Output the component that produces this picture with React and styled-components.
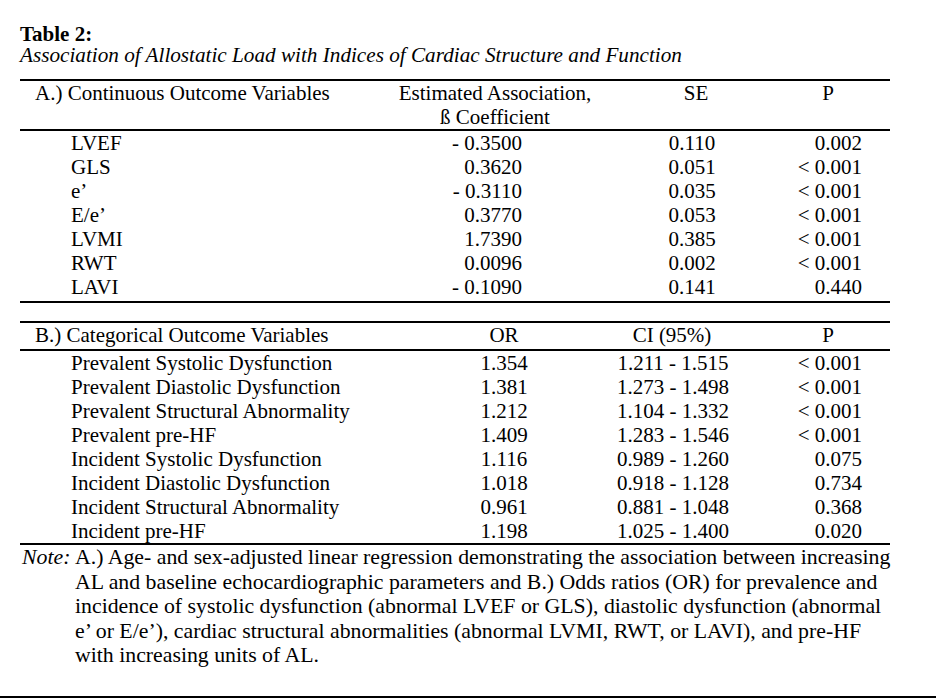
import React from 'react';
import styled, { createGlobalStyle } from 'styled-components';

const GlobalStyle = createGlobalStyle`
  html, body {
    margin: 0;
    padding: 0;
    background: #ffffff;
  }
`;

const Page = styled.div`
  width: 936px;
  height: 698px;
  box-sizing: border-box;
  padding: 24px 46px 0 20px;
  border-bottom: 2px solid #000;
  font-family: "Liberation Serif", "Times New Roman", serif;
  font-size: 21px;
  color: #000;
`;

const Title = styled.div`
  font-weight: bold;
  line-height: 21px;
`;

const Subtitle = styled.div`
  font-style: italic;
  font-size: 21.2px;
  line-height: 21px;
  margin-bottom: 13px;
`;

const Section = styled.div`
  border-top: 2px solid #000;
  border-bottom: ${p => (p.$closed ? '2px solid #000' : 'none')};
  padding-bottom: ${p => p.$pb || 0}px;
  margin-top: ${p => p.$mt || 0}px;
`;

const Row = styled.div`
  display: grid;
  grid-template-columns: ${p => p.$cols};
  line-height: ${p => p.$lh || 24}px;
  white-space: nowrap;
`;

const HeadRow = styled(Row)`
  border-bottom: 2px solid #000;
  padding-bottom: ${p => p.$pb || 0}px;
`;

const Cell = styled.div`
  text-align: ${p => p.$align || 'left'};
  padding-left: ${p => p.$pl || 0}px;
  padding-right: ${p => p.$pr || 0}px;
`;

const Note = styled.div`
  display: flex;
  font-size: 21.8px;
  line-height: 24.6px;
`;

const NoteLabel = styled.div`
  flex: 0 0 53px;
  padding-left: 2px;
  font-style: italic;
`;

const NoteBody = styled.div`
  white-space: nowrap;
`;

const colsA = '350px 250px 148px 122px';
const colsB = '412px 144px 192px 122px';

const continuous = [
  ['LVEF', '- 0.3500', '0.110', '0.002'],
  ['GLS', '0.3620', '0.051', '< 0.001'],
  ['e\u2019', '- 0.3110', '0.035', '< 0.001'],
  ['E/e\u2019', '0.3770', '0.053', '< 0.001'],
  ['LVMI', '1.7390', '0.385', '< 0.001'],
  ['RWT', '0.0096', '0.002', '< 0.001'],
  ['LAVI', '- 0.1090', '0.141', '0.440'],
];

const categorical = [
  ['Prevalent Systolic Dysfunction', '1.354', '1.211 - 1.515', '< 0.001'],
  ['Prevalent Diastolic Dysfunction', '1.381', '1.273 - 1.498', '< 0.001'],
  ['Prevalent Structural Abnormality', '1.212', '1.104 - 1.332', '< 0.001'],
  ['Prevalent pre-HF', '1.409', '1.283 - 1.546', '< 0.001'],
  ['Incident Systolic Dysfunction', '1.116', '0.989 - 1.260', '0.075'],
  ['Incident Diastolic Dysfunction', '1.018', '0.918 - 1.128', '0.734'],
  ['Incident Structural Abnormality', '0.961', '0.881 - 1.048', '0.368'],
  ['Incident pre-HF', '1.198', '1.025 - 1.400', '0.020'],
];

const noteLines = [
  'A.) Age- and sex-adjusted linear regression demonstrating the association between increasing',
  'AL and baseline echocardiographic parameters and B.) Odds ratios (OR) for prevalence and',
  'incidence of systolic dysfunction (abnormal LVEF or GLS), diastolic dysfunction (abnormal',
  'e\u2019 or E/e\u2019), cardiac structural abnormalities (abnormal LVMI, RWT, or LAVI), and pre-HF',
  'with increasing units of AL.',
];

export default function App() {
  return (
    <>
      <GlobalStyle />
      <Page>
        <Title>Table 2:</Title>
        <Subtitle>
          Association of Allostatic Load with Indices of Cardiac Structure and Function
        </Subtitle>

        <Section $closed $pb={2}>
          <HeadRow $cols={colsA}>
            <Cell $pl={15}>A.) Continuous Outcome Variables</Cell>
            <Cell $align="center">
              Estimated Association,
              <br />
              {'\u00df'} Coefficient
            </Cell>
            <Cell $align="center" $pl={4}>SE</Cell>
            <Cell $align="center" $pr={2}>P</Cell>
          </HeadRow>
          {continuous.map(([label, est, se, p]) => (
            <Row key={label} $cols={colsA}>
              <Cell $pl={51}>{label}</Cell>
              <Cell $align="right" $pr={98}>{est}</Cell>
              <Cell $align="center" $pr={4}>{se}</Cell>
              <Cell $align="right" $pr={28}>{p}</Cell>
            </Row>
          ))}
        </Section>

        <Section $mt={18}>
          <HeadRow $cols={colsB} $pb={2}>
            <Cell $pl={15}>B.) Categorical Outcome Variables</Cell>
            <Cell $align="center">OR</Cell>
            <Cell $align="center">CI (95%)</Cell>
            <Cell $align="center" $pr={2}>P</Cell>
          </HeadRow>
          {categorical.map(([label, or, ci, p]) => (
            <Row key={label} $cols={colsB}>
              <Cell $pl={51}>{label}</Cell>
              <Cell $align="center">{or}</Cell>
              <Cell $align="center" $pl={2}>{ci}</Cell>
              <Cell $align="right" $pr={28}>{p}</Cell>
            </Row>
          ))}
        </Section>

        <Section>
          <Note>
            <NoteLabel>Note:</NoteLabel>
            <NoteBody>
              {noteLines.map(line => (
                <div key={line}>{line}</div>
              ))}
            </NoteBody>
          </Note>
        </Section>
      </Page>
    </>
  );
}
